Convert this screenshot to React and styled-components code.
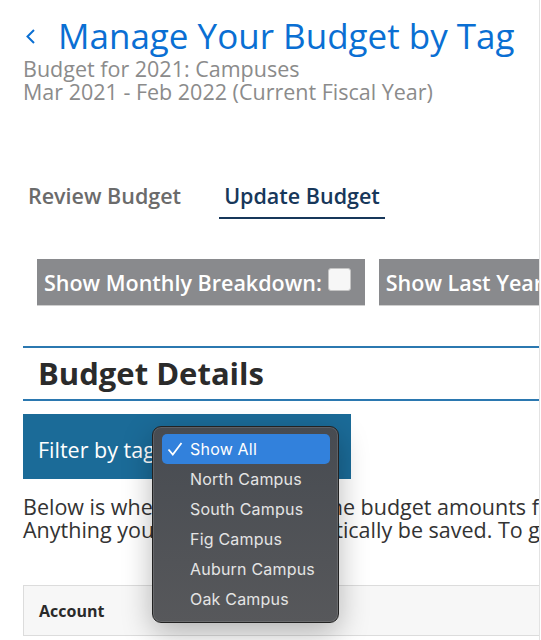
import React, { useState } from 'react';
import styled, { createGlobalStyle } from 'styled-components';

const GlobalStyle = createGlobalStyle`
  body {
    margin: 0;
    background: #fff;
    font-family: "Open Sans", "Liberation Sans", sans-serif;
  }
`;

const Page = styled.div`
  position: relative;
  width: 540px;
  height: 640px;
  box-sizing: border-box;
  padding-left: 23px;
  border-right: 1px solid #e3e3e3;
  overflow: hidden;
`;

const Inner = styled.div`
  width: 1000px;
`;

const Header = styled.header`
  display: flex;
  align-items: center;
  gap: 22px;
  padding-top: 15px;
`;

const Back = styled.svg`
  margin-left: 2px;
  flex: none;
`;

const Title = styled.h1`
  margin: 0;
  font-size: 35px;
  line-height: 42px;
  font-weight: 400;
  color: #0a6fd3;
`;

const Subtitle = styled.div`
  font-size: 21.5px;
  line-height: 23px;
  color: #8b8b8b;
`;

const Tabs = styled.nav`
  display: flex;
  gap: 33px;
  margin-top: 81px;
`;

const Tab = styled.div`
  padding: 0 5px 9px;
  font-size: 21.5px;
  line-height: 24px;
  font-weight: 600;
  color: ${(p) => (p.active ? '#17375a' : '#6b6b6b')};
  border-bottom: 2px solid ${(p) => (p.active ? '#17375a' : 'transparent')};
`;

const Toggles = styled.div`
  display: flex;
  gap: 14px;
  margin: 40px 0 0 14px;
`;

const Toggle = styled.label`
  display: flex;
  align-items: center;
  gap: 6px;
  height: 46px;
  padding: 0 14px 0 7px;
  background: #898a8d;
  border-bottom: 1px solid #cfcfcf;
  color: #fff;
  font-size: 21.5px;
  font-weight: 600;
  white-space: nowrap;
`;

const Box = styled.span`
  width: 23px;
  height: 23px;
  margin-top: -6px;
  box-sizing: border-box;
  background: #f7f7f7;
  border: 1px solid #c4c4c4;
  border-radius: 3px;
`;

const Section = styled.section`
  margin-top: 40px;
  border-top: 2px solid #2b78b0;
  border-bottom: 2px solid #2b78b0;
`;

const SectionTitle = styled.h2`
  margin: 0;
  padding-left: 15px;
  font-size: 31px;
  line-height: 51px;
  font-weight: 700;
  color: #2b2b2b;
`;

const FilterBar = styled.div`
  display: flex;
  align-items: center;
  width: 328px;
  height: 65px;
  box-sizing: border-box;
  margin-top: 13px;
  padding: 6px 15px 0;
  background: #1b6b98;
  color: #fff;
  font-size: 21.5px;
`;

const Intro = styled.p`
  margin: 17px 0 0;
  font-size: 21.5px;
  line-height: 22.5px;
  color: #333;
  white-space: nowrap;
`;

const TableHead = styled.div`
  display: flex;
  align-items: center;
  height: 51px;
  box-sizing: border-box;
  margin-top: 44px;
  padding-left: 15px;
  background: #f7f7f7;
  border: 1px solid #dcdcdc;
  font-size: 16px;
  font-weight: 700;
  color: #2a2a2a;
`;

const Menu = styled.ul`
  position: absolute;
  left: 152px;
  top: 426px;
  width: 187px;
  margin: 0;
  padding: 7px 8px 8px 9px;
  box-sizing: border-box;
  list-style: none;
  background: linear-gradient(#474b51, #57585b);
  border: 1px solid #222;
  border-radius: 9px;
  box-shadow: inset 0 0 0 1px rgba(255, 255, 255, 0.12), 0 10px 30px rgba(0, 0, 0, 0.28);
  font-family: Inter, "Liberation Sans", sans-serif;
`;

const Item = styled.li`
  display: flex;
  align-items: center;
  height: 30px;
  padding-left: 5px;
  border-radius: 5px;
  font-size: 16px;
  letter-spacing: 0.2px;
  color: ${(p) => (p.selected ? '#fff' : '#e4e4e4')};
  background: ${(p) => (p.selected ? '#3281dc' : 'transparent')};
`;

const Check = styled.span`
  display: flex;
  width: 23px;
`;

const tags = ['Show All', 'North Campus', 'South Campus', 'Fig Campus', 'Auburn Campus', 'Oak Campus'];

export default function App() {
  const [tag, setTag] = useState('Show All');

  return (
    <>
      <GlobalStyle />
      <Page>
        <Inner>
          <Header>
            <Back width="11" height="17" viewBox="0 0 11 17">
              <path d="M9 2 L2.5 8.5 L9 15" fill="none" stroke="#0a6fd3" strokeWidth="2" />
            </Back>
            <Title>Manage Your Budget by Tag</Title>
          </Header>
          <Subtitle>
            Budget for 2021: Campuses
            <br />
            Mar 2021 - Feb 2022 (Current Fiscal Year)
          </Subtitle>
          <Tabs>
            <Tab>Review Budget</Tab>
            <Tab active>Update Budget</Tab>
          </Tabs>
          <Toggles>
            <Toggle>
              Show Monthly Breakdown:
              <Box />
            </Toggle>
            <Toggle>
              Show Last Year's Budget:
              <Box />
            </Toggle>
          </Toggles>
          <Section>
            <SectionTitle>Budget Details</SectionTitle>
          </Section>
          <FilterBar>Filter by tag:</FilterBar>
          <Intro>
            Below is where you can enter the budget amounts for each account and tag.
            <br />
            Anything you enter will automatically be saved. To go back, use the link above.
          </Intro>
          <TableHead>Account</TableHead>
        </Inner>
        <Menu>
          {tags.map((t) => (
            <Item key={t} selected={t === tag} onClick={() => setTag(t)}>
              <Check>
                {t === tag && (
                  <svg width="16" height="14" viewBox="0 0 16 14">
                    <path d="M1.5 7.5 L5.8 12.5 L14.5 1" fill="none" stroke="#fff" strokeWidth="1.8" />
                  </svg>
                )}
              </Check>
              {t}
            </Item>
          ))}
        </Menu>
      </Page>
    </>
  );
}
